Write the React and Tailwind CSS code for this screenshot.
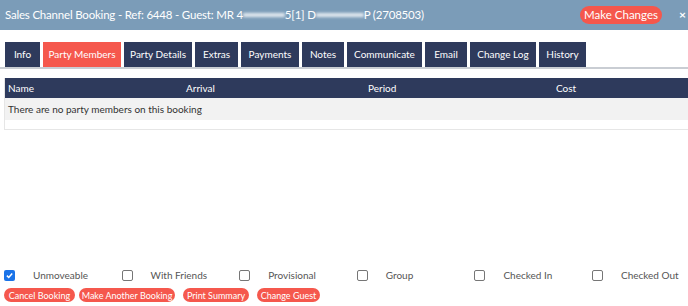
import React from 'react';

const tabs = [
  { label: 'Info', w: 'w-[35px]' },
  { label: 'Party Members', w: 'w-[78px]', active: true },
  { label: 'Party Details', w: 'w-[68px]' },
  { label: 'Extras', w: 'w-[43px]' },
  { label: 'Payments', w: 'w-[58px]' },
  { label: 'Notes', w: 'w-[42px]' },
  { label: 'Communicate', w: 'w-[75px]' },
  { label: 'Email', w: 'w-[42px]' },
  { label: 'Change Log', w: 'w-[66px]' },
  { label: 'History', w: 'w-[47px]' },
];

const flags = [
  { label: 'Unmoveable', checked: true },
  { label: 'With Friends' },
  { label: 'Provisional' },
  { label: 'Group' },
  { label: 'Checked In' },
  { label: 'Checked Out' },
];

const actions = [
  { label: 'Cancel Booking', cls: 'w-[71px]' },
  { label: 'Make Another Booking', cls: 'w-[96px] ml-[4px]' },
  { label: 'Print Summary', cls: 'w-[66px] ml-[8px]' },
  { label: 'Change Guest', cls: 'w-[63px] ml-[8px]' },
];

const Smudge = ({ w }) => (
  <span className={`inline-block h-[4px] ${w} bg-white/80 blur-[1.5px] align-middle`} />
);

const App = () => {
  return (
    <div className="w-[688px] h-[306px] bg-white overflow-hidden flex flex-col font-['Lato','Open_Sans',sans-serif] text-[#333]">
      {/* title bar */}
      <div className="h-[30px] shrink-0 bg-[#7b9cb8] flex items-center pl-[5px] text-white">
        <div className="text-[11.5px] tracking-[-0.2px] flex items-center whitespace-nowrap">
          <span>Sales Channel Booking - Ref: 6448 - Guest: MR 4</span>
          <Smudge w="w-[42px]" />
          <span>5[1] D</span>
          <Smudge w="w-[48px]" />
          <span>P (2708503)</span>
        </div>
        <button className="ml-auto w-[82px] h-[18px] rounded-full bg-[#f5574c] text-white text-[11.5px] leading-none flex items-center justify-center">
          Make Changes
        </button>
        <span className="ml-[17px] w-[9px] text-[12px] font-bold leading-none">×</span>
      </div>

      {/* tabs */}
      <div className="mt-[12px] pl-[5px] flex gap-[3px] border-b-2 border-[#c9cdd3] h-[27px] shrink-0">
        {tabs.map(t => (
          <div
            key={t.label}
            className={`${t.w} shrink-0 h-[25px] flex items-center justify-center text-[10px] text-white ${t.active ? 'bg-[#f5584d]' : 'bg-[#2e3a5c]'}`}
          >
            {t.label}
          </div>
        ))}
      </div>

      {/* party table */}
      <div className="mt-[9px] ml-[4px] border-l border-b border-[#e6e6e6] shrink-0">
        <div className="h-[20px] bg-[#2e3a5c] text-white text-[10px] grid grid-cols-[178px_182px_188px_1fr] items-center pl-[3px]">
          <span>Name</span>
          <span>Arrival</span>
          <span>Period</span>
          <span>Cost</span>
        </div>
        <div className="h-[22px] bg-[#f2f2f2] text-[10px] flex items-center pl-[3px]">
          There are no party members on this booking
        </div>
        <div className="h-[9px] bg-white" />
      </div>

      <div className="flex-1" />

      {/* flags */}
      <div className="pl-[4px] flex items-center h-[14px] text-[10px] text-[#555] shrink-0">
        {flags.map(f => (
          <div key={f.label} className="w-[117.6px] shrink-0 flex items-center">
            {f.checked ? (
              <span className="w-[11px] h-[11px] rounded-[2px] bg-[#1a73e8] flex items-center justify-center">
                <svg viewBox="0 0 12 12" className="w-[9px] h-[9px]">
                  <path d="M2.5 6.2 L5 8.6 L9.6 3.2" fill="none" stroke="white" strokeWidth="2" />
                </svg>
              </span>
            ) : (
              <span className="w-[11px] h-[11px] rounded-[2px] border border-[#767676] bg-white" />
            )}
            <span className="ml-[18px]">{f.label}</span>
          </div>
        ))}
      </div>

      {/* actions */}
      <div className="pl-[4px] mt-[6px] mb-[4px] flex shrink-0">
        {actions.map(a => (
          <button
            key={a.label}
            className={`${a.cls} h-[14px] rounded-full bg-[#f5584d] text-white text-[9px] leading-none flex items-center justify-center whitespace-nowrap`}
          >
            {a.label}
          </button>
        ))}
      </div>
    </div>
  );
};

export default App;
